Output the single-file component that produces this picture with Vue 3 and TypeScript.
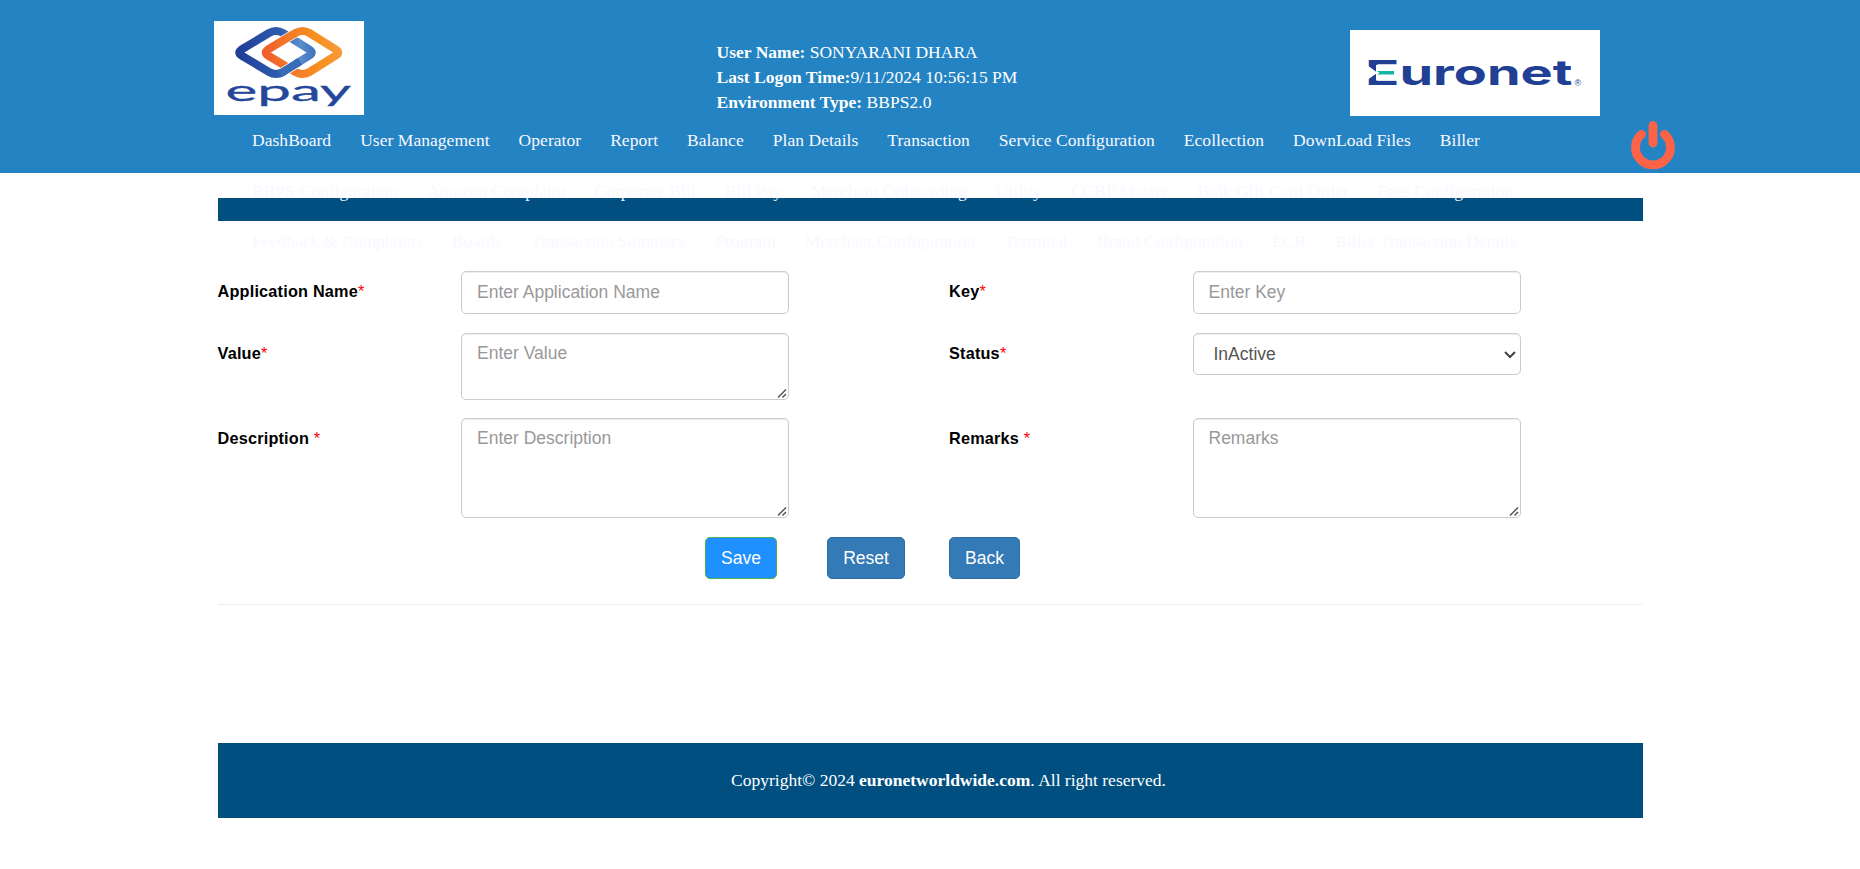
<script setup lang="ts">
interface Field {
  label: string
  spaced: boolean
  placeholder: string
  kind: 'input' | 'area' | 'select'
  size: string
}

const menuRows: string[][] = [
  ['DashBoard', 'User Management', 'Operator', 'Report', 'Balance', 'Plan Details', 'Transaction', 'Service Configuration', 'Ecollection', 'DownLoad Files', 'Biller'],
  ['BBPS Configuration', 'Amazon Complaint', 'Corporate Bill', 'Bill Pay', 'Merchant Onboarding', 'Utility', 'CCBP Master', 'Bulk Gift Card Order', 'Fees Configuration'],
  ['Feedback & Complaints', 'Boards', 'Transaction Summary', 'Program', 'Merchant Configuration', 'Terminal', 'Brand Configuration', 'ECR', 'Biller Transaction Details'],
]

const fields: Field[] = [
  { label: 'Application Name', spaced: false, placeholder: 'Enter Application Name', kind: 'input', size: 'h-input' },
  { label: 'Key', spaced: false, placeholder: 'Enter Key', kind: 'input', size: 'h-input' },
  { label: 'Value', spaced: false, placeholder: 'Enter Value', kind: 'area', size: 'h-short' },
  { label: 'Status', spaced: false, placeholder: 'InActive', kind: 'select', size: 'h-select' },
  { label: 'Description', spaced: true, placeholder: 'Enter Description', kind: 'area', size: 'h-tall' },
  { label: 'Remarks', spaced: true, placeholder: 'Remarks', kind: 'area', size: 'h-tall' },
]
</script>

<template>
  <div class="page">
    <header class="header">
      <div class="brand-row">
        <svg class="epay" viewBox="0 0 150 94" width="150" height="94">
          <defs>
            <linearGradient id="blueRing" gradientUnits="userSpaceOnUse" x1="21" y1="30" x2="102" y2="30">
              <stop offset="0" stop-color="#1f3c94" />
              <stop offset="0.55" stop-color="#2c5cad" />
              <stop offset="0.8" stop-color="#5b8ccb" />
              <stop offset="1" stop-color="#3d74bd" />
            </linearGradient>
            <linearGradient id="orangeRing" gradientUnits="userSpaceOnUse" x1="48" y1="40" x2="128" y2="28">
              <stop offset="0" stop-color="#ee5a2c" />
              <stop offset="0.35" stop-color="#f4782a" />
              <stop offset="0.7" stop-color="#f7901f" />
              <stop offset="1" stop-color="#f59a3c" />
            </linearGradient>
          </defs>
          <rect width="150" height="94" fill="#fff" />
          <g fill="none" stroke-width="8">
            <path d="M55 12 Q62 8 69 12 L95.500 28.500 Q100 31.500 95.500 34.500 L69 51 Q62 55 55 51 L27.500 34.500 Q23 31.500 27.500 28.500 Z" stroke="url(#blueRing)" />
            <path d="M67 20.600 L81.500 12" stroke="#fff" stroke-width="9.500" />
            <path d="M81.500 12 Q88.500 8 95.500 12 L122 28.500 Q126.500 31.500 122 34.500 L95.500 51 Q88.500 55 81.500 51 L54 34.500 Q49.500 31.500 54 28.500 Z" stroke="url(#orangeRing)" />
            <path d="M82 42.900 L69 51" stroke="#fff" stroke-width="9.500" />
            <path d="M86 40.400 L69 51 L66 52.500" stroke="#386cb7" />
          </g>
          <text x="11.5" y="79.5" textLength="125.500" lengthAdjust="spacingAndGlyphs" class="epay-word">epay</text>
        </svg>
        <div class="session">
          <div><b>User Name:</b> SONYARANI DHARA</div>
          <div><b>Last Logon Time:</b>9/11/2024 10:56:15 PM</div>
          <div><b>Environment Type:</b> BBPS2.0</div>
        </div>
        <svg class="euronet" viewBox="0 0 250 86" width="250" height="86">
          <rect width="250" height="86" fill="#fff" />
          <text x="15" y="55" textLength="34.500" lengthAdjust="spacingAndGlyphs" class="euro-e">E</text>
          <path d="M26 35 H50 V50.500 H26 Z M15 33.500 L27.500 42.700 L15 51.500 Z" fill="#fff" />
          <path d="M27 41 H44 V44.500 H27 L29.500 42.700 Z" fill="#12b5a6" />
          <text x="49.500" y="55" textLength="173" lengthAdjust="spacingAndGlyphs" class="euro-rest">uronet</text>
          <text x="224.500" y="55.500" class="euro-reg">®</text>
        </svg>
      </div>
      <nav class="menu">
        <div v-for="(row, i) in menuRows" :key="i" class="menu-row">
          <a v-for="item in row" :key="item">{{ item }}</a>
        </div>
      </nav>
      <svg class="power" viewBox="0 0 44 48" width="44" height="48">
        <path d="M10.500 13.300 A17.500 17.500 0 1 0 33.500 13.300 M22 4.500 V22" fill="none" stroke="#ff6347" stroke-width="8.800" stroke-linecap="round" />
      </svg>
    </header>

    <main class="container">
      <div class="title-bar"></div>
      <form class="form" @submit.prevent>
        <div v-for="f in fields" :key="f.label" class="field">
          <label>{{ f.label }}<template v-if="f.spaced">&nbsp;</template><span class="req">*</span></label>
          <div class="box">
            <input v-if="f.kind === 'input'" class="control" :class="f.size" type="text" :placeholder="f.placeholder" />
            <template v-else-if="f.kind === 'area'">
              <textarea class="control" :class="f.size" :placeholder="f.placeholder"></textarea>
              <svg class="grip" width="12" height="12" viewBox="0 0 12 12">
                <path d="M2 10.500 L10 2.500 M6.500 10.500 L10 7" stroke="#555" stroke-width="1.500" />
              </svg>
            </template>
            <template v-else>
              <select class="control" :class="f.size"><option>{{ f.placeholder }}</option></select>
              <svg class="caret" width="12" height="8" viewBox="0 0 12 8">
                <path d="M1 1 L6 6 L11 1" fill="none" stroke="#444" stroke-width="2" />
              </svg>
            </template>
          </div>
        </div>
      </form>
      <div class="actions">
        <button class="btn save">Save</button>
        <button class="btn reset">Reset</button>
        <button class="btn back">Back</button>
      </div>
      <hr class="rule" />
      <footer class="footer">
        <span>Copyright© 2024 <b>euronetworldwide.com</b>. All right reserved.</span>
      </footer>
    </main>
  </div>
</template>

<style>
body {
  margin: 0;
  background: #fff;
}
</style>

<style scoped>
.page {
  height: 869px;
  overflow: hidden;
  font-family: "Liberation Serif", "Times New Roman", serif;
  font-size: 17.5px;
  line-height: 25px;
  color: #333;
}
.header {
  position: relative;
  height: 173px;
  background: #2483c3;
  color: #fff;
}
.brand-row {
  display: flex;
  align-items: flex-start;
  height: 115px;
}
.epay {
  margin: 21px 0 0 214px;
}
.session {
  width: 633.500px;
  margin: 40px 0 0 352.500px;
  letter-spacing: 0.02px;
}
.euronet {
  margin-top: 30px;
}
.epay-word {
  font: 400 29px Lato, sans-serif;
  fill: #24479b;
  stroke: #24479b;
  stroke-width: 0.3px;
}
.euro-e {
  font: 700 34.400px Inter, sans-serif;
  fill: #213f93;
}
.euro-rest {
  font: 700 35px Inter, sans-serif;
  fill: #213f93;
}
.euro-reg {
  font: 9px "Liberation Sans", sans-serif;
  fill: #213f93;
}
.menu {
  position: relative;
  z-index: 2;
  padding-left: 252px;
}
.menu-row {
  display: flex;
  gap: 29px;
  height: 50.500px;
  line-height: 50px;
  letter-spacing: 0.045px;
  white-space: nowrap;
  color: #f8f8ff;
}
.power {
  position: absolute;
  left: 1631px;
  top: 121px;
}
.container {
  width: 1425px;
  margin-left: 218px;
}
.title-bar {
  height: 23px;
  margin-top: 25px;
  background: #004f80;
}
.form {
  display: grid;
  grid-template-columns: 731.500px 1fr;
  grid-template-rows: 62px 85px 119px;
  margin-left: -0.500px;
  padding-top: 50px;
}
.field {
  display: grid;
  grid-template-columns: 243.500px 328px;
  align-items: start;
}
.field label {
  padding-top: 8px;
  font: bold 16.250px/25px "Liberation Sans", Arial, sans-serif;
  letter-spacing: 0.2px;
  color: #000;
}
.req {
  font-weight: 400;
  letter-spacing: 0;
  color: #f00;
}
.box {
  position: relative;
  display: flex;
}
.control {
  box-sizing: border-box;
  width: 328px;
  margin: 0;
  padding: 7px 15px;
  font: 17.500px/25px "Liberation Sans", Arial, sans-serif;
  color: #555;
  background: #fff;
  border: 1px solid #ccc;
  border-radius: 5px;
  box-shadow: inset 0 1px 1px rgba(0, 0, 0, 0.075);
  resize: none;
  appearance: none;
}
.control::placeholder {
  color: #999;
  opacity: 1;
}
.h-input {
  height: 43px;
}
.h-select {
  height: 42px;
  padding-left: 20px;
}
.h-short {
  height: 67px;
}
.h-tall {
  height: 100px;
}
.grip {
  position: absolute;
  right: 1px;
  bottom: 1px;
}
.caret {
  position: absolute;
  right: 5px;
  top: 18px;
}
.actions {
  display: flex;
  padding-left: 487px;
}
.btn {
  box-sizing: border-box;
  height: 42px;
  padding: 0;
  font: 17.500px/25px "Liberation Sans", Arial, sans-serif;
  color: #fff;
  background: #337ab7;
  border: 1px solid #2e6da4;
  border-radius: 5px;
}
.save {
  width: 72px;
  background: #1e90ff;
  border-color: #4cae4c;
}
.reset {
  width: 78px;
  margin-left: 50px;
}
.back {
  width: 71px;
  margin-left: 44px;
}
.rule {
  margin: 25px 0 0;
  border: 0;
  border-top: 1px solid #eee;
}
.footer {
  display: flex;
  align-items: center;
  justify-content: center;
  height: 75px;
  box-sizing: border-box;
  margin-top: 138px;
  padding-left: 36px;
  background: #004f80;
  color: #fff;
}
</style>
